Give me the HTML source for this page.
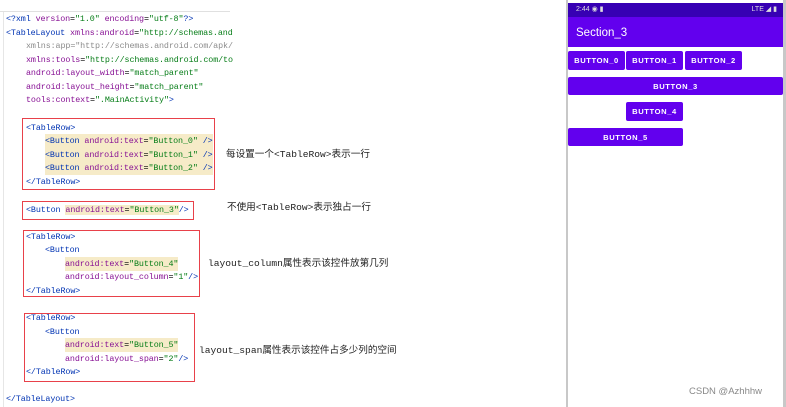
<!DOCTYPE html>
<html><head><meta charset="utf-8"><style>
body{margin:0;width:786px;height:407px;background:#fff;position:relative;overflow:hidden;font-family:"Liberation Sans",sans-serif}
.c{position:absolute;font-family:"Liberation Mono",monospace;font-size:8.4px;letter-spacing:-0.1px;line-height:14px;height:14px;white-space:pre;color:#000}
.t{color:#0033b3}.a{color:#871094}.v{color:#067d17}.g{color:#8c8c8c}
.hl{background:#f6ebc8}
.box{position:absolute;border:1px solid #e8414a}
.n{position:absolute;font-family:"Liberation Mono","Noto Sans CJK SC",monospace;font-size:9.6px;color:#222;white-space:nowrap;line-height:14px}
.b{position:absolute;background:#6200ee;color:#fff;font-size:7.6px;font-weight:bold;letter-spacing:.6px;text-align:center;border-radius:2px;display:flex;align-items:center;justify-content:center}
</style></head><body>
<div style="position:absolute;left:3px;top:12px;width:1px;height:395px;background:#e6e6e6"></div>
<div style="position:absolute;left:0;top:11px;width:230px;height:1px;background:#e0e0e0"></div>

<div class="c" style="left:6px;top:12px"><span class="t">&lt;?xml </span><span class="a">version</span>=<span class="v">"1.0"</span> <span class="a">encoding</span>=<span class="v">"utf-8"</span><span class="t">?&gt;</span></div>
<div class="c" style="left:6px;top:26px"><span class="t">&lt;TableLayout </span><span class="a">xmlns:android</span>=<span class="v">"http://schemas.and</span></div>
<div class="c g" style="left:26px;top:39px">xmlns:app="http://schemas.android.com/apk/</div>
<div class="c" style="left:26px;top:53px"><span class="a">xmlns:tools</span>=<span class="v">"http://schemas.android.com/to</span></div>
<div class="c" style="left:26px;top:66px"><span class="a">android:layout_width</span>=<span class="v">"match_parent"</span></div>
<div class="c" style="left:26px;top:80px"><span class="a">android:layout_height</span>=<span class="v">"match_parent"</span></div>
<div class="c" style="left:26px;top:93px"><span class="a">tools:context</span>=<span class="v">".MainActivity"</span><span class="t">&gt;</span></div>

<div class="box" style="left:22px;top:118px;width:191px;height:70px"></div>
<div class="c" style="left:26px;top:121px"><span class="t">&lt;TableRow&gt;</span></div>
<div class="c hl" style="left:45px;top:134px"><span class="t">&lt;Button </span><span class="a">android:text</span>=<span class="v">"Button_0"</span> <span class="t">/&gt;</span></div>
<div class="c hl" style="left:45px;top:148px"><span class="t">&lt;Button </span><span class="a">android:text</span>=<span class="v">"Button_1"</span> <span class="t">/&gt;</span></div>
<div class="c hl" style="left:45px;top:161px"><span class="t">&lt;Button </span><span class="a">android:text</span>=<span class="v">"Button_2"</span> <span class="t">/&gt;</span></div>
<div class="c" style="left:26px;top:175px"><span class="t">&lt;/TableRow&gt;</span></div>
<div class="n" style="left:226px;top:148px">每设置一个&lt;TableRow&gt;表示一行</div>

<div class="box" style="left:22px;top:201px;width:170px;height:17px"></div>
<div class="c" style="left:26px;top:203px"><span class="t">&lt;Button </span><span class="hl"><span class="a">android:text</span>=<span class="v">"Button_3"</span></span><span class="t">/&gt;</span></div>
<div class="n" style="left:227px;top:201px">不使用&lt;TableRow&gt;表示独占一行</div>

<div class="box" style="left:23px;top:230px;width:175px;height:65px"></div>
<div class="c" style="left:26px;top:230px"><span class="t">&lt;TableRow&gt;</span></div>
<div class="c" style="left:45px;top:243px"><span class="t">&lt;Button</span></div>
<div class="c hl" style="left:65px;top:257px"><span class="a">android:text</span>=<span class="v">"Button_4"</span></div>
<div class="c" style="left:65px;top:270px"><span class="a">android:layout_column</span>=<span class="v">"1"</span><span class="t">/&gt;</span></div>
<div class="c" style="left:26px;top:284px"><span class="t">&lt;/TableRow&gt;</span></div>
<div class="n" style="left:208px;top:257px">layout_column属性表示该控件放第几列</div>

<div class="box" style="left:24px;top:313px;width:169px;height:67px"></div>
<div class="c" style="left:26px;top:311px"><span class="t">&lt;TableRow&gt;</span></div>
<div class="c" style="left:45px;top:325px"><span class="t">&lt;Button</span></div>
<div class="c hl" style="left:65px;top:338px"><span class="a">android:text</span>=<span class="v">"Button_5"</span></div>
<div class="c" style="left:65px;top:352px"><span class="a">android:layout_span</span>=<span class="v">"2"</span><span class="t">/&gt;</span></div>
<div class="c" style="left:26px;top:365px"><span class="t">&lt;/TableRow&gt;</span></div>
<div class="n" style="left:199px;top:344px">layout_span属性表示该控件占多少列的空间</div>

<div class="c" style="left:6px;top:392px"><span class="t">&lt;/TableLayout&gt;</span></div>

<div style="position:absolute;left:566px;top:0;width:2px;height:407px;background:#c8c8c8"></div>
<div style="position:absolute;left:783px;top:0;width:3px;height:407px;background:#c8c8c8"></div>
<div style="position:absolute;left:568px;top:3px;width:215px;height:14px;background:#3700b3;color:#ddd;font-size:7px;line-height:14px">
<span style="position:absolute;left:8px">2:44 &#9673; &#9646;</span><span style="position:absolute;right:6px">LTE &#9698; &#9646;</span></div>
<div style="position:absolute;left:568px;top:17px;width:215px;height:30px;background:#6200ee;color:#fff;font-size:11.5px;line-height:32px;padding-left:8px;box-sizing:border-box">Section_3</div>
<div class="b" style="left:568px;top:51px;width:57px;height:19px">BUTTON_0</div>
<div class="b" style="left:626px;top:51px;width:57px;height:19px">BUTTON_1</div>
<div class="b" style="left:685px;top:51px;width:57px;height:19px">BUTTON_2</div>
<div class="b" style="left:568px;top:77px;width:215px;height:18px">BUTTON_3</div>
<div class="b" style="left:626px;top:102px;width:57px;height:19px">BUTTON_4</div>
<div class="b" style="left:568px;top:128px;width:115px;height:18px">BUTTON_5</div>
<div style="position:absolute;left:689px;top:386px;font-size:9.5px;color:#888">CSDN @Azhhhw</div>
</body></html>
